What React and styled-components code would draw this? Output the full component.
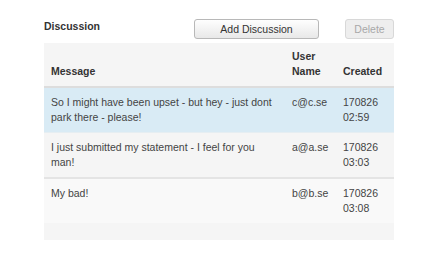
import React from "react";
import styled, { createGlobalStyle } from "styled-components";

const Global = createGlobalStyle`
  html, body { margin: 0; padding: 0; background: #ffffff; }
  body { font-family: "Liberation Sans", Arial, sans-serif; font-size: 10.5px; color: #444; }
`;

const Page = styled.div`
  padding: 19px 0 0 44px;
  width: 350px;
`;

const Toolbar = styled.div`
  display: flex;
  align-items: flex-start;
  height: 20px;
`;

const Title = styled.div`
  flex: 1;
  font-weight: bold;
  color: #333;
  line-height: 15px;
`;

const Button = styled.button`
  box-sizing: border-box;
  height: 20px;
  width: ${(p) => p.$w}px;
  margin-right: ${(p) => p.$mr || 0}px;
  padding: 0;
  font-family: "Liberation Sans", Arial, sans-serif;
  font-size: 10.5px;
  line-height: 18px;
  border-radius: 3px;
  border: 1px solid ${(p) => (p.disabled ? "#d8d8d8" : "#b8b8b8")};
  background: ${(p) =>
    p.disabled ? "#eeeeee" : "linear-gradient(#fefefe, #e8e8e8)"};
  color: ${(p) => (p.disabled ? "#a8a8a8" : "#333")};
`;

const Table = styled.table`
  margin-top: 4px;
  width: 350px;
  table-layout: fixed;
  border-collapse: collapse;
  background: #f5f5f5;
`;

const Th = styled.th`
  text-align: left;
  vertical-align: bottom;
  font-weight: bold;
  color: #333;
  line-height: 15px;
  padding: 6px 7px 7px;
  border-bottom: 2px solid #dddddd;
  background: #f5f5f5;
`;

const Row = styled.tr`
  background: ${(p) => p.$bg};
  border-bottom: ${(p) => p.$border};
`;

const Td = styled.td`
  vertical-align: top;
  line-height: 15px;
  padding: 7px ${(p) => p.$pr || 7}px 7px 7px;
  color: #444;
`;

const Footer = styled.div`
  height: 17px;
  width: 350px;
  background: #f5f5f5;
`;

const rows = [
  { msg: "So I might have been upset - but hey - just dont park there - please!", user: "c@c.se", date: "170826", time: "02:59", bg: "#d9ebf5", border: "1px solid #e6eef2" },
  { msg: "I just submitted my statement - I feel for you man!", user: "a@a.se", date: "170826", time: "03:03", bg: "#f5f5f5", border: "2px solid #e4e4e4" },
  { msg: "My bad!", user: "b@b.se", date: "170826", time: "03:08", bg: "#f9f9f9", border: "none" },
];

export default function App() {
  return (
    <>
      <Global />
      <Page>
        <Toolbar>
          <Title>Discussion</Title>
          <Button $w={125} $mr={26}>Add Discussion</Button>
          <Button $w={49} disabled>Delete</Button>
        </Toolbar>
        <Table>
          <colgroup>
            <col style={{ width: 241 }} />
            <col style={{ width: 51 }} />
            <col style={{ width: 58 }} />
          </colgroup>
          <thead>
            <tr>
              <Th>Message</Th>
              <Th>User Name</Th>
              <Th>Created</Th>
            </tr>
          </thead>
          <tbody>
            {rows.map((r, i) => (
              <Row key={i} $bg={r.bg} $border={r.border}>
                <Td $pr={10}>{r.msg}</Td>
                <Td $pr={2}>{r.user}</Td>
                <Td>
                  {r.date}
                  <br />
                  {r.time}
                </Td>
              </Row>
            ))}
          </tbody>
        </Table>
        <Footer />
      </Page>
    </>
  );
}
